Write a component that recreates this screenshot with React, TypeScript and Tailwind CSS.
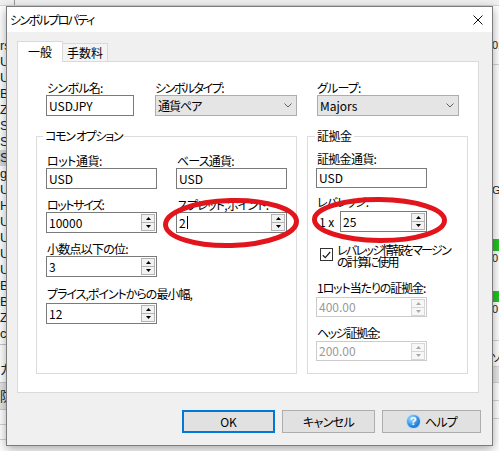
import type { ReactNode } from "react";

const symbols = [
  "rs", "USDCHF", "USDJPY", "BTCUSD", "ZARJPY", "SGDJPY", "SEKJPY", "SEKJPY", "ge",
  "USDCAD", "HKDJPY", "USDMXN", "USDNOK", "USDSEK", "USDSGD", "BRENT", "BTCUSD", "ZECUSD", "co",
];

function Label({ children, className = "" }: { children: ReactNode; className?: string }) {
  return <div className={`h-[14px] whitespace-nowrap text-[12px] leading-[14px] ${className}`}>{children}</div>;
}

function Spinner({ disabled }: { disabled?: boolean }) {
  const fill = disabled ? "#a9a9a9" : "#000";
  const btn = disabled ? "border-[#d6d6d6] bg-[#f7f7f7]" : "border-[#b4b4b4] bg-[#f2f2f2]";
  return (
    <div className="mr-[1px] flex flex-col">
      <div className={`flex h-[9px] w-[14px] items-center justify-center border ${btn}`}>
        <svg width="5" height="3" viewBox="0 0 5 3">
          <path d="M0 3 L2.5 0 L5 3 Z" fill={fill} />
        </svg>
      </div>
      <div className={`-mt-px flex h-[9px] w-[14px] items-center justify-center border ${btn}`}>
        <svg width="5" height="3" viewBox="0 0 5 3">
          <path d="M0 0 L5 0 L2.5 3 Z" fill={fill} />
        </svg>
      </div>
    </div>
  );
}

function Box({
  children,
  className = "",
  spin,
  disabled,
  caret,
}: {
  children: ReactNode;
  className?: string;
  spin?: boolean;
  disabled?: boolean;
  caret?: boolean;
}) {
  return (
    <div
      className={`flex items-center border bg-white pl-[2px] ${
        disabled ? "border-[#cccccc] text-[#9a9a9a]" : "border-[#7a7a7a] text-black"
      } ${className}`}
    >
      <span className="flex flex-1 items-center text-[12px] leading-none">
        {children}
        {caret && <span className="ml-px inline-block h-[13px] w-px bg-black" />}
      </span>
      {spin && <Spinner disabled={disabled} />}
    </div>
  );
}

function Select({ children, className = "" }: { children: ReactNode; className?: string }) {
  return (
    <div className={`flex h-[21px] items-center border border-[#adadad] bg-[#e5e5e5] pl-[2px] ${className}`}>
      <span className="flex-1 text-[12px] leading-none">{children}</span>
      <svg width="8" height="5" viewBox="0 0 8 5" className="mr-[4px]">
        <path d="M0.5 0.5 L4 4 L7.5 0.5" stroke="#606060" fill="none" />
      </svg>
    </div>
  );
}

function Button({ children, className = "" }: { children: ReactNode; className?: string }) {
  return (
    <div className={`flex h-[23px] items-center justify-center bg-[#e1e1e1] text-[12px] leading-none ${className}`}>
      {children}
    </div>
  );
}

export default function App() {
  return (
    <div className="relative h-[451px] w-[499px] overflow-hidden bg-white font-['Noto_Sans_CJK_JP',sans-serif] text-black [font-feature-settings:'palt']">
      {/* application behind the dialog */}
      <div className="flex h-[6px] border-b border-[#d4d4d4] bg-[#f0f0f0]">
        <div className="w-[15px] border-r border-[#9a9a9a]" />
      </div>
      <div className="flex h-[445px]">
        <div className="w-[120px] pt-[32px] font-['Liberation_Sans',sans-serif] text-[13px] text-[#222]">
          {symbols.map((s, i) => (
            <div key={i} className={`h-[16px] leading-[16px] ${i === 7 ? "bg-[#d9d9d9]" : ""}`}>
              {s}
            </div>
          ))}
          <div className="mt-[2px] h-[38px] border-t border-[#c8c8c8] pt-[16px] font-['Noto_Sans_CJK_JP',sans-serif] leading-[16px]">
            カスタム
          </div>
          <div className="flex h-[28px] items-center border-y border-[#c8c8c8] bg-[#e4e4e4] font-['Noto_Sans_CJK_JP',sans-serif]">
            防衛
          </div>
          <div className="h-[15px] border-b border-[#d4d4d4]" />
          <div className="h-[15px] border-b border-[#d4d4d4]" />
        </div>
        <div className="flex-1" />
        <div className="flex w-[7px] flex-col overflow-hidden font-['Liberation_Sans',sans-serif] text-[11px] leading-[14px] text-[#222]">
          <div className="mt-[32px] whitespace-nowrap">01</div>
          <div className="mt-[12px] border-t border-[#d4d4d4]" />
          <div className="mt-[118px] whitespace-nowrap">GM</div>
          <div className="mt-[42px] h-[12px] bg-[#22c322]" />
          <div className="whitespace-nowrap">0</div>
          <div className="mt-[26px] h-[11px] bg-[#22c322]" />
          <div className="whitespace-nowrap">0</div>
          <div className="mt-[24px] border-t border-[#d4d4d4]" />
          <div className="mt-[9px] whitespace-nowrap font-['Noto_Sans_CJK_JP',sans-serif]">ソア</div>
          <div className="mt-[2px] h-[17px] border-y border-[#d4d4d4] bg-[#e8e8e8]" />
          <div className="h-[18px] border-b border-[#d4d4d4]" />
          <div className="h-[18px] border-b border-[#d4d4d4]" />
        </div>
      </div>

      {/* dialog window */}
      <div className="absolute left-[6px] top-[6px] flex h-[440px] w-[487px] flex-col border border-[#7c7c7c] bg-[#f0f0f0] shadow-[0_3px_10px_rgba(0,0,0,0.35)]">
        <div className="flex h-[25px] items-center bg-white pl-[3px]">
          <span className="text-[12px] leading-none tracking-[-1.6px]">シンボルプロパティ</span>
          <svg width="10" height="10" viewBox="0 0 10 10" className="ml-auto mr-[9px]">
            <path d="M0.5 0.5 L9.5 9.5 M9.5 0.5 L0.5 9.5" stroke="#111" strokeWidth="1" />
          </svg>
        </div>

        <div className="pl-[10px] pt-[9px]">
          {/* tabs */}
          <div className="flex h-[20px] items-end">
            <div className="relative z-10 -mb-px flex h-[21px] w-[46px] items-center justify-center border-x border-t border-[#d9d9d9] bg-white pb-[1px] text-[12px] leading-none">
              一般
            </div>
            <div className="-ml-px flex h-[18px] w-[46px] items-center justify-center border-x border-t border-[#d9d9d9] bg-[#f4f4f4] text-[12px] leading-none">
              手数料
            </div>
          </div>

          {/* tab page */}
          <div className="h-[332px] w-[462px] border border-[#d9d9d9] bg-white">
            <div className="flex pl-[28px] pt-[19px]">
              <div className="w-[109px]">
                <Label className="pl-[1px] tracking-[-0.7px]">シンボル名:</Label>
                <Box className="h-[21px] w-[88px]">USDJPY</Box>
              </div>
              <div className="w-[162px]">
                <Label className="tracking-[-1.5px]">シンボルタイプ:</Label>
                <Select className="w-[142px] tracking-[-1px]">通貨ペア</Select>
              </div>
              <div>
                <Label className="tracking-[-0.8px]">グループ:</Label>
                <Select className="w-[142px]">Majors</Select>
              </div>
            </div>

            <div className="mt-[20px] flex gap-[10px] pl-[18px]">
              {/* common options */}
              <div className="relative h-[238px] w-[261px] border border-[#dcdcdc]">
                <span className="absolute left-[6px] top-[-8px] bg-white px-[2px] text-[12px] leading-[14px] tracking-[-1.3px]">
                  コモン オプション
                </span>
                <div className="flex pl-[9px] pt-[17px]">
                  <div className="w-[130px]">
                    <Label className="pl-[1px] tracking-[-0.5px]">ロット通貨:</Label>
                    <Box className="h-[21px] w-[111px]">USD</Box>
                  </div>
                  <div>
                    <Label className="pl-[1px] tracking-[-0.8px]">ベース通貨:</Label>
                    <Box className="h-[21px] w-[111px]">USD</Box>
                  </div>
                </div>
                <div className="mt-[9px] flex pl-[9px]">
                  <div className="w-[130px]">
                    <Label className="pl-[1px] tracking-[-1.4px]">ロットサイズ:</Label>
                    <Box spin className="h-[21px] w-[111px]">10000</Box>
                  </div>
                  <div>
                    <Label className="pl-[1px] tracking-[-0.8px]">スプレッド,ポイント:</Label>
                    <Box spin caret className="h-[21px] w-[111px]">2</Box>
                  </div>
                </div>
                <div className="mt-[9px] pl-[9px]">
                  <Label className="pl-[1px] tracking-[-0.75px]">小数点以下の位:</Label>
                  <Box spin className="h-[21px] w-[111px]">3</Box>
                </div>
                <div className="mt-[10px] pl-[9px]">
                  <Label className="pl-[1px] tracking-[-1px]">プライス,ポイントからの最小幅,</Label>
                  <Box spin className="mt-[2px] h-[21px] w-[111px]">12</Box>
                </div>
              </div>

              {/* margin */}
              <div className="relative h-[238px] w-[161px] border border-[#dcdcdc] pl-[8px]">
                <span className="absolute left-[7px] top-[-8px] bg-white px-[2px] text-[12px] leading-[14px] tracking-[-0.5px]">
                  証拠金
                </span>
                <Label className="mt-[15px] pl-[1px] tracking-[-0.7px]">証拠金通貨:</Label>
                <Box className="mt-[2px] h-[20px] w-[111px]">USD</Box>
                <Label className="mt-[7px] pl-[1px] tracking-[-1px]">レバレッジ:</Label>
                <div className="mt-[2px] flex items-center">
                  <span className="w-[24px] pl-[3px] text-[12px] leading-none">1 x</span>
                  <Box spin className="h-[21px] w-[87px]">25</Box>
                </div>
                <div className="mt-[12px] flex items-start">
                  <div className="ml-[4px] mt-[4px] flex h-[13px] w-[13px] items-center justify-center border border-[#333] bg-white">
                    <svg width="9" height="8" viewBox="0 0 9 8">
                      <path d="M0.8 4.2 L3.3 6.6 L8.2 1" stroke="#222" strokeWidth="1.3" fill="none" />
                    </svg>
                  </div>
                  <div className="ml-[4px] whitespace-nowrap text-[12px] leading-[12px] tracking-[-1.7px]">
                    レバレッジ情報をマージン
                    <br />
                    の計算に使用
                  </div>
                </div>
                <Label className="mt-[13px] pl-[1px] tracking-[-1.1px]">1ロット当たりの証拠金:</Label>
                <Box spin disabled className="mt-[2px] h-[20px] w-[111px]">400.00</Box>
                <Label className="mt-[9px] pl-[1px] tracking-[-1.5px]">ヘッジ証拠金:</Label>
                <Box spin disabled className="mt-[1px] h-[20px] w-[111px]">200.00</Box>
              </div>
            </div>
          </div>

          {/* buttons */}
          <div className="mt-[17px] flex justify-end gap-[7px] pr-[11px]">
            <Button className="w-[93px] border-2 border-[#0078d7]">OK</Button>
            <Button className="w-[93px] border border-[#adadad] tracking-[-0.6px]">キャンセル</Button>
            <Button className="w-[99px] gap-[4px] border border-[#adadad] tracking-[-0.7px]">
              <span className="flex h-[15px] w-[15px] items-center justify-center rounded-full border border-[#bcdcf5] bg-[radial-gradient(circle_at_35%_30%,#a9dbff,#2a8be0_55%,#135fb3)] font-['Liberation_Sans',sans-serif] text-[11px] font-bold leading-none tracking-normal text-white">
                ?
              </span>
              ヘルプ
            </Button>
          </div>
        </div>
      </div>

      {/* red marks drawn over the screenshot */}
      <svg className="pointer-events-none absolute left-0 top-0" width="499" height="451" viewBox="0 0 499 451">
        <ellipse cx="231" cy="223" rx="65.5" ry="22.5" transform="rotate(-1.5 231 223)" stroke="#e2151d" strokeWidth="5" fill="none" />
        <ellipse cx="379.5" cy="220" rx="65" ry="20.5" transform="rotate(0.5 379.5 220)" stroke="#e2151d" strokeWidth="5" fill="none" />
      </svg>
    </div>
  );
}
